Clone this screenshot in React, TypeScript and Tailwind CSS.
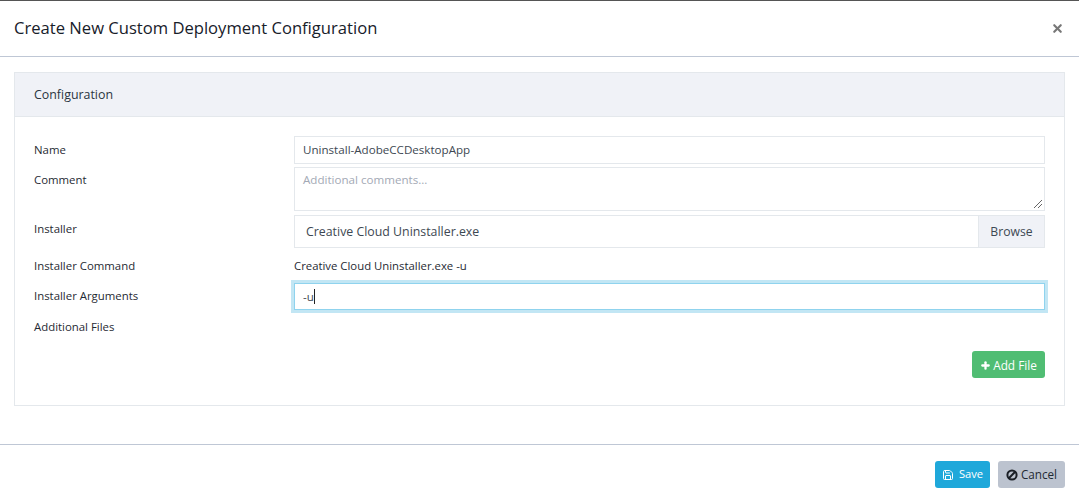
import { Plus, Save, X } from "lucide-react";

const font = "font-['Open_Sans','Noto_Sans',sans-serif]";

function Label({ children, className = "" }: { children: string; className?: string }) {
  return <div className={`w-[260px] shrink-0 text-[11.4px] leading-[16px] text-[#1f2a33] ${className}`}>{children}</div>;
}

export default function App() {
  return (
    <div className={`${font} w-[1079px] h-[502px] bg-white border-t border-[#555] overflow-hidden`}>
      <header className="h-[56px] border-b border-[#bfc7d5] flex items-center justify-between pl-[14px] pr-[15px] pb-[2px]">
        <h1 className="text-[16.6px] leading-[22px] font-medium text-[#17202a]">Create New Custom Deployment Configuration</h1>
        <X size={13} strokeWidth={4} className="text-[#777] mt-[1px]" />
      </header>

      <div className="h-[388px] border-b border-[#bfc7d5] px-[14px] pt-[15px]">
        <section className="w-[1051px] h-[334px] border border-[#e4e8ec]">
          <div className="h-[44px] bg-[#f0f2f7] border-b border-[#e4e8ec] flex items-center px-[19px] pt-[1px] text-[12.4px] text-[#2a353f]">
            Configuration
          </div>
          <div className="pt-[19px] pl-[19px] pr-[19px]">
            <div className="flex items-center h-[28px]">
              <Label>Name</Label>
              <div className="flex-1 h-[28px] border border-[#e4e8ec] flex items-center px-[8px] text-[11.6px] text-[#3d4852]">
                Uninstall-AdobeCCDesktopApp
              </div>
            </div>
            <div className="flex mt-[3px]">
              <Label className="pt-[5px]">Comment</Label>
              <div className="relative flex-1 h-[44px] border border-[#e4e8ec] px-[8px] pt-[4px] text-[11.6px] leading-[16px] text-[#a3a9b5]">
                Additional comments...
                <svg className="absolute right-[1px] bottom-[1px]" width="10" height="10" viewBox="0 0 10 10">
                  <path d="M1 9 9 1M5 9 9 5" stroke="#666" strokeWidth="1" />
                </svg>
              </div>
            </div>
            <div className="flex mt-[4px]">
              <Label className="pt-[6px]">Installer</Label>
              <div className="flex-1 h-[33px] border border-[#e4e8ec] flex">
                <div className="flex-1 flex items-center pl-[11px] pt-[2px] text-[12.35px] text-[#3d4852]">Creative Cloud Uninstaller.exe</div>
                <div className="w-[66px] bg-[#f0f2f7] border-l border-[#e4e8ec] flex items-center justify-center pt-[1px] text-[12.2px] text-[#3d4852]">Browse</div>
              </div>
            </div>
            <div className="flex items-center h-[16px] mt-[10px]">
              <Label>Installer Command</Label>
              <div className="text-[11.35px] leading-[16px] text-[#1f2a33]">Creative Cloud Uninstaller.exe -u</div>
            </div>
            <div className="flex mt-[9px]">
              <Label className="pt-[5px]">Installer Arguments</Label>
              <div className="flex-1 h-[27px] border border-[#8fd3ee] outline-[3px] outline-[#c2e6f4] flex items-center px-[8px] text-[11.6px] text-[#3d4852]">
                -u<span className="w-px h-[15px] bg-[#222]" />
              </div>
            </div>
            <Label className="mt-[9px]">Additional Files</Label>
            <div className="flex justify-end mt-[16px]">
              <button className="w-[73px] h-[27px] rounded-[3px] bg-[#50bd73] text-white text-[11.8px] flex items-center justify-center gap-[2px] pt-[1px]">
                <Plus size={11} strokeWidth={5} />
                <span className="pt-[1px]">Add File</span>
              </button>
            </div>
          </div>
        </section>
      </div>

      <footer className="flex justify-end gap-[8px] pt-[16px] pr-[14px]">
        <button className="w-[55px] h-[27px] rounded-[3px] bg-[#1fa8da] text-white text-[11.2px] flex items-center justify-center gap-[5px]">
          <Save size={12} strokeWidth={2} />
          Save
        </button>
        <button className="w-[67px] h-[27px] rounded-[3px] bg-[#bcc3cf] text-[#1f2a33] text-[11.7px] flex items-center justify-center gap-[3px]">
          <svg width="12" height="12" viewBox="0 0 12 12" fill="none" stroke="#1a1f26" strokeWidth="2">
            <circle cx="6" cy="6" r="4.6" />
            <path d="M2.8 9.2 9.2 2.8" />
          </svg>
          Cancel
        </button>
      </footer>
    </div>
  );
}
